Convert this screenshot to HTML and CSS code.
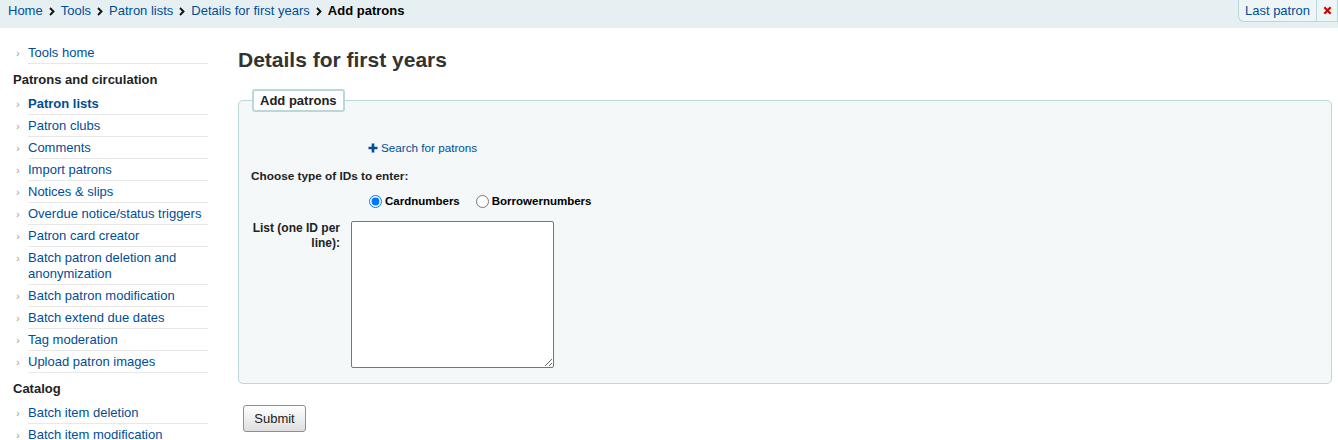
FILE: index.html
```html
<!DOCTYPE html>
<html lang="en">
<head>
<meta charset="utf-8">
<title>Add patrons</title>
<link rel="stylesheet" href="styles.css">
</head>
<body>
<header class="topbar">
  <nav class="crumbs">
    <a href="#">Home</a>
    <svg class="sep" viewBox="0 0 6 9" width="6" height="9"><path d="M1 1 L4.5 4.5 L1 8" fill="none" stroke="#111" stroke-width="1.9"/></svg>
    <a href="#">Tools</a>
    <svg class="sep" viewBox="0 0 6 9" width="6" height="9"><path d="M1 1 L4.5 4.5 L1 8" fill="none" stroke="#111" stroke-width="1.9"/></svg>
    <a href="#">Patron lists</a>
    <svg class="sep" viewBox="0 0 6 9" width="6" height="9"><path d="M1 1 L4.5 4.5 L1 8" fill="none" stroke="#111" stroke-width="1.9"/></svg>
    <a href="#">Details for first years</a>
    <svg class="sep" viewBox="0 0 6 9" width="6" height="9"><path d="M1 1 L4.5 4.5 L1 8" fill="none" stroke="#111" stroke-width="1.9"/></svg>
    <span class="current">Add patrons</span>
  </nav>
  <div class="lastpatron">
    <a href="#" class="lp-btn">Last patron</a>
    <a href="#" class="lp-close"><svg viewBox="0 0 10 10" width="9" height="9"><path d="M1.5 1.5 L8.5 8.5 M8.5 1.5 L1.5 8.5" stroke="#cc0000" stroke-width="2.4" stroke-linecap="butt"/></svg></a>
  </div>
</header>

<div class="page">
  <aside class="sidebar">
    <ul>
      <li><a href="#">Tools home</a></li>
    </ul>
    <h5>Patrons and circulation</h5>
    <ul>
      <li class="active"><a href="#">Patron lists</a></li>
      <li><a href="#">Patron clubs</a></li>
      <li><a href="#">Comments</a></li>
      <li><a href="#">Import patrons</a></li>
      <li><a href="#">Notices &amp; slips</a></li>
      <li><a href="#">Overdue notice/status triggers</a></li>
      <li><a href="#">Patron card creator</a></li>
      <li><a href="#">Batch patron deletion and anonymization</a></li>
      <li><a href="#">Batch patron modification</a></li>
      <li><a href="#">Batch extend due dates</a></li>
      <li><a href="#">Tag moderation</a></li>
      <li><a href="#">Upload patron images</a></li>
    </ul>
    <h5>Catalog</h5>
    <ul>
      <li><a href="#">Batch item deletion</a></li>
      <li><a href="#">Batch item modification</a></li>
    </ul>
  </aside>

  <main class="content">
    <h1>Details for first years</h1>
    <form>
      <fieldset class="rows">
        <legend>Add patrons</legend>
        <div class="search-row">
          <a href="#"><svg class="plus" viewBox="0 0 10 10" width="10" height="10"><path d="M3.7 0.5 H6.3 V3.7 H9.5 V6.3 H6.3 V9.5 H3.7 V6.3 H0.5 V3.7 H3.7 Z" fill="#004d99"/></svg>Search for patrons</a>
        </div>
        <div class="choose">Choose type of IDs to enter:</div>
        <div class="radios">
          <label><input type="radio" name="idtype" checked>Cardnumbers</label>
          <label><input type="radio" name="idtype">Borrowernumbers</label>
        </div>
        <div class="list-row">
          <label for="ids">List (one ID per line):</label>
          <textarea id="ids"></textarea>
        </div>
      </fieldset>
      <button type="button" class="submit">Submit</button>
    </form>
  </main>
</div>
</body>
</html>
```

FILE: styles.css
```css
html, body {
  margin: 0;
  padding: 0;
}
body {
  font-family: "Liberation Sans", Arial, sans-serif;
  font-size: 13px;
  color: #000;
  background: #fff;
  overflow: hidden;
}
a {
  color: #004d99;
  text-decoration: none;
}

/* top bar */
.topbar {
  display: flex;
  height: 28px;
  background: #e6f0f2;
}
.crumbs {
  display: flex;
  align-items: center;
  height: 16px;
  padding: 3px 0 0 8px;
  line-height: 16px;
  font-size: 13px;
}
.crumbs .sep {
  margin: 0 6px 0 6px;
}
.crumbs .current {
  font-weight: bold;
  color: #000;
}
.lastpatron {
  margin-left: auto;
  display: flex;
  align-self: flex-start;
  height: 22px;
}
.lp-btn {
  display: flex;
  align-items: center;
  padding: 0 6px 0 6px;
  border: 1px solid #b9d8d9;
  border-top: none;
  border-radius: 0 0 0 6px;
  background: #eef5f6;
  font-size: 13px;
}
.lp-close {
  display: flex;
  align-items: center;
  justify-content: center;
  width: 20px;
  border: 1px solid #b9d8d9;
  border-top: none;
  border-left: none;
  background: #eef5f6;
}

/* page */
.page {
  display: flex;
  align-items: flex-start;
}
.sidebar {
  width: 195px;
  flex: none;
  padding: 14px 0 0 13px;
}
.sidebar ul {
  margin: 0;
  padding: 0 0 0 15px;
}
.sidebar li {
  padding: 3px 0 2px;
  line-height: 16px;
  border-bottom: 1px solid #e8e8e8;
  font-size: 13px;
}
.sidebar li::marker {
  content: "\203A\00a0\00a0\00a0";
  color: #999;
  font-size: 10px;
}
.sidebar li.active a {
  font-weight: bold;
}
.sidebar h5 {
  margin: 8px 0 5px;
  font-size: 13px;
  line-height: 16px;
  font-weight: bold;
  color: #222;
}

.content {
  flex: 1;
  margin: 0 6px 0 30px;
}
.content h1 {
  margin: 19px 0 17px;
  font-size: 21px;
  line-height: 25px;
  font-weight: bold;
  color: #333;
}
fieldset.rows {
  margin: 0;
  padding: 0 12px 15px 12px;
  border: 1px solid #b9d8d9;
  border-radius: 5px;
  background: #f4f8f9;
  min-width: 0;
}
fieldset.rows legend {
  margin-left: 1px;
  padding: 2px 6px;
  line-height: 15px;
  font-size: 13px;
  font-weight: bold;
  color: #222;
  background: #fff;
  border: 2px solid #b9d8d9;
  border-radius: 3px;
}
.search-row {
  margin: 28px 0 0 117px;
  line-height: 16px;
  font-size: 11.7px;
}
.search-row a {
  display: inline-flex;
  align-items: center;
}
.search-row .plus {
  margin-right: 3px;
}
.choose {
  margin-top: 11px;
  line-height: 16px;
  font-size: 11.8px;
  font-weight: bold;
  color: #222;
}
.radios {
  display: flex;
  align-items: center;
  gap: 15px;
  margin: 9px 0 0 117px;
  height: 16px;
  font-size: 11.5px;
  font-weight: bold;
}
.radios label {
  display: flex;
  align-items: center;
}
.radios input {
  margin: 0 3px 0 1px;
  width: 13px;
  height: 13px;
}
.list-row {
  display: flex;
  align-items: flex-start;
  margin-top: 12px;
}
.list-row label {
  width: 89px;
  margin-right: 11px;
  text-align: right;
  font-size: 12px;
  line-height: 15px;
  font-weight: bold;
  color: #222;
}
.list-row textarea {
  display: block;
  width: 203px;
  height: 147px;
  box-sizing: border-box;
  margin: 0;
  border: 1px solid #767676;
  border-radius: 2px;
  background: #fff;
}
.submit {
  display: block;
  margin: 21px 0 0 5px;
  width: 63px;
  height: 27px;
  padding: 0;
  font-family: "Liberation Sans", Arial, sans-serif;
  font-size: 13px;
  color: #222;
  background: linear-gradient(#ffffff, #dedede);
  border: 1px solid #8f8f8f;
  border-radius: 3px;
}
```
